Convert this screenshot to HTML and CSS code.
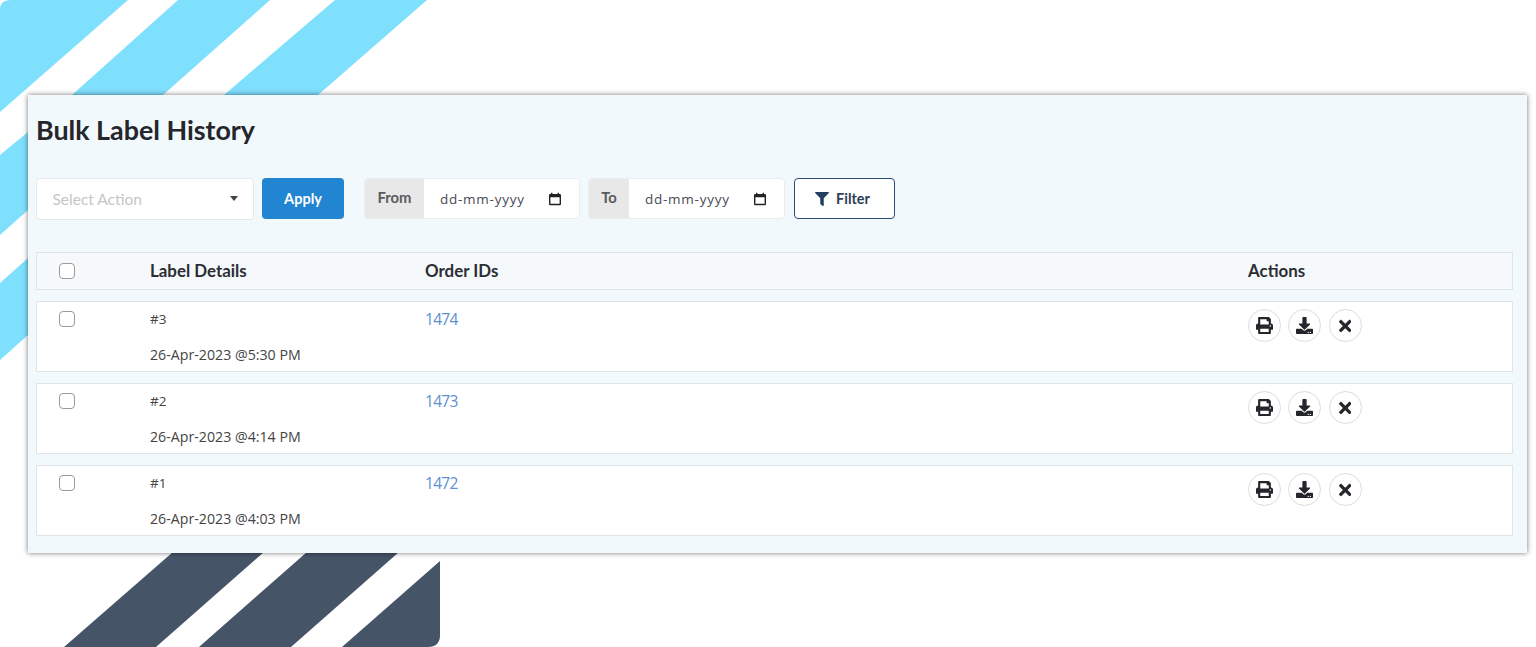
FILE: index.html
```html
<!DOCTYPE html>
<html lang="en">
<head>
<meta charset="utf-8">
<title>Bulk Label History</title>
<link rel="stylesheet" href="styles.css">
</head>
<body>
<svg class="backdrop" width="1536" height="647" viewBox="0 0 1536 647" aria-hidden="true">
  <g fill="#7fe0fe">
    <path d="M10 0H128L0 112V10Q0 0 10 0Z"/>
    <path d="M178 0H270L163 95L28 210L0 235V155L28 132L72 95Z"/>
    <path d="M335 0H427L318 95L28 335L0 360V283L28 258L224 95Z"/>
  </g>
  <g fill="#465468">
    <path d="M173 552H264L156 647H64Z"/>
    <path d="M307 552H399L291 647H199Z"/>
    <path d="M440 561V635Q440 647 428 647H342Z"/>
  </g>
</svg>
<main class="card">
  <h1 class="title">Bulk Label History</h1>
  <div class="toolbar">
    <div class="select"><span>Select Action</span><i class="caret"></i></div>
    <button class="apply">Apply</button>
    <div class="date date-from">
      <span class="date-label">From</span>
      <span class="date-value">dd-mm-yyyy</span>
      <svg class="cal" viewBox="0 0 14 14"><path d="M1 3.2Q1 2 2.2 2H3V.8H4.4V2H9.6V.8H11V2H11.8Q13 2 13 3.2V12Q13 13.2 11.8 13.2H2.2Q1 13.2 1 12ZM2.4 5.2V11.8H11.6V5.2Z"/></svg>
    </div>
    <div class="date date-to">
      <span class="date-label">To</span>
      <span class="date-value">dd-mm-yyyy</span>
      <svg class="cal" viewBox="0 0 14 14"><path d="M1 3.2Q1 2 2.2 2H3V.8H4.4V2H9.6V.8H11V2H11.8Q13 2 13 3.2V12Q13 13.2 11.8 13.2H2.2Q1 13.2 1 12ZM2.4 5.2V11.8H11.6V5.2Z"/></svg>
    </div>
    <button class="filter">
      <svg class="filter-icon" viewBox="0 0 512 512"><path d="M487.976 0H24.028C2.71 0-8.047 25.866 7.058 40.971L192 225.941V432c0 7.831 3.821 15.17 10.237 19.662l80 55.98C298.02 518.69 320 507.493 320 487.98V225.941l184.947-184.97C520.021 25.896 509.338 0 487.976 0z"/></svg>
      Filter
    </button>
  </div>

  <div class="row head">
    <div class="cell-check"><span class="check"></span></div>
    <div>Label Details</div>
    <div>Order IDs</div>
    <div>Actions</div>
  </div>

  <div class="row item">
    <div class="cell-check"><span class="check"></span></div>
    <div class="details"><div class="num">#3</div><div>26-Apr-2023 @5:30 PM</div></div>
    <div><a class="order" href="#">1474</a></div>
    <div class="actions">
      <button class="round"><svg class="i-print" viewBox="0 0 512 512"><path d="M448 192V77.25c0-8.49-3.37-16.62-9.37-22.63L393.37 9.37c-6-6-14.14-9.37-22.63-9.37H96C78.33 0 64 14.33 64 32v160c-35.35 0-64 28.65-64 64v112c0 8.84 7.16 16 16 16h48v96c0 17.67 14.33 32 32 32h320c17.67 0 32-14.33 32-32v-96h48c8.84 0 16-7.16 16-16V256c0-35.35-28.65-64-64-64zm-64 256H128v-96h256v96zm0-224H128V64h192v48c0 8.84 7.16 16 16 16h48v96zm48 72c-13.25 0-24-10.75-24-24 0-13.26 10.75-24 24-24s24 10.74 24 24c0 13.25-10.75 24-24 24z"/></svg></button>
      <button class="round"><svg class="i-print" viewBox="0 0 512 512"><path d="M216 0h80c13.3 0 24 10.7 24 24v168h87.7c17.8 0 26.7 21.5 14.1 34.1L269.7 378.3c-7.5 7.5-19.8 7.5-27.3 0L90.1 226.1c-12.6-12.6-3.7-34.1 14.1-34.1H192V24c0-13.3 10.7-24 24-24zm296 376v112c0 13.3-10.7 24-24 24H24c-13.3 0-24-10.7-24-24V376c0-13.3 10.7-24 24-24h146.7l49 49c20.1 20.1 52.5 20.1 72.6 0l49-49H488c13.3 0 24 10.7 24 24zm-124 88c0-11-9-20-20-20s-20 9-20 20 9 20 20 20 20-9 20-20zm64 0c0-11-9-20-20-20s-20 9-20 20 9 20 20 20 20-9 20-20z"/></svg></button>
      <button class="round"><svg class="i-x" viewBox="0 0 352 512"><path d="M242.72 256l100.07-100.07c12.28-12.28 12.28-32.19 0-44.48l-22.24-22.24c-12.28-12.28-32.19-12.28-44.48 0L176 189.28 75.93 89.21c-12.28-12.28-32.19-12.28-44.48 0L9.21 111.45c-12.28 12.28-12.28 32.19 0 44.48L109.28 256 9.21 356.07c-12.28 12.28-12.28 32.19 0 44.48l22.24 22.24c12.28 12.28 32.2 12.28 44.48 0L176 322.72l100.07 100.07c12.28 12.28 32.2 12.28 44.48 0l22.24-22.24c12.28-12.28 12.28-32.19 0-44.48L242.72 256z"/></svg></button>
    </div>
  </div>

  <div class="row item">
    <div class="cell-check"><span class="check"></span></div>
    <div class="details"><div class="num">#2</div><div>26-Apr-2023 @4:14 PM</div></div>
    <div><a class="order" href="#">1473</a></div>
    <div class="actions">
      <button class="round"><svg class="i-print" viewBox="0 0 512 512"><path d="M448 192V77.25c0-8.49-3.37-16.62-9.37-22.63L393.37 9.37c-6-6-14.14-9.37-22.63-9.37H96C78.33 0 64 14.33 64 32v160c-35.35 0-64 28.65-64 64v112c0 8.84 7.16 16 16 16h48v96c0 17.67 14.33 32 32 32h320c17.67 0 32-14.33 32-32v-96h48c8.84 0 16-7.16 16-16V256c0-35.35-28.65-64-64-64zm-64 256H128v-96h256v96zm0-224H128V64h192v48c0 8.84 7.16 16 16 16h48v96zm48 72c-13.25 0-24-10.75-24-24 0-13.26 10.75-24 24-24s24 10.74 24 24c0 13.25-10.75 24-24 24z"/></svg></button>
      <button class="round"><svg class="i-print" viewBox="0 0 512 512"><path d="M216 0h80c13.3 0 24 10.7 24 24v168h87.7c17.8 0 26.7 21.5 14.1 34.1L269.7 378.3c-7.5 7.5-19.8 7.5-27.3 0L90.1 226.1c-12.6-12.6-3.7-34.1 14.1-34.1H192V24c0-13.3 10.7-24 24-24zm296 376v112c0 13.3-10.7 24-24 24H24c-13.3 0-24-10.7-24-24V376c0-13.3 10.7-24 24-24h146.7l49 49c20.1 20.1 52.5 20.1 72.6 0l49-49H488c13.3 0 24 10.7 24 24zm-124 88c0-11-9-20-20-20s-20 9-20 20 9 20 20 20 20-9 20-20zm64 0c0-11-9-20-20-20s-20 9-20 20 9 20 20 20 20-9 20-20z"/></svg></button>
      <button class="round"><svg class="i-x" viewBox="0 0 352 512"><path d="M242.72 256l100.07-100.07c12.28-12.28 12.28-32.19 0-44.48l-22.24-22.24c-12.28-12.28-32.19-12.28-44.48 0L176 189.28 75.93 89.21c-12.28-12.28-32.19-12.28-44.48 0L9.21 111.45c-12.28 12.28-12.28 32.19 0 44.48L109.28 256 9.21 356.07c-12.28 12.28-12.28 32.19 0 44.48l22.24 22.24c12.28 12.28 32.2 12.28 44.48 0L176 322.72l100.07 100.07c12.28 12.28 32.2 12.28 44.48 0l22.24-22.24c12.28-12.28 12.28-32.19 0-44.48L242.72 256z"/></svg></button>
    </div>
  </div>

  <div class="row item">
    <div class="cell-check"><span class="check"></span></div>
    <div class="details"><div class="num">#1</div><div>26-Apr-2023 @4:03 PM</div></div>
    <div><a class="order" href="#">1472</a></div>
    <div class="actions">
      <button class="round"><svg class="i-print" viewBox="0 0 512 512"><path d="M448 192V77.25c0-8.49-3.37-16.62-9.37-22.63L393.37 9.37c-6-6-14.14-9.37-22.63-9.37H96C78.33 0 64 14.33 64 32v160c-35.35 0-64 28.65-64 64v112c0 8.84 7.16 16 16 16h48v96c0 17.67 14.33 32 32 32h320c17.67 0 32-14.33 32-32v-96h48c8.84 0 16-7.16 16-16V256c0-35.35-28.65-64-64-64zm-64 256H128v-96h256v96zm0-224H128V64h192v48c0 8.84 7.16 16 16 16h48v96zm48 72c-13.25 0-24-10.75-24-24 0-13.26 10.75-24 24-24s24 10.74 24 24c0 13.25-10.75 24-24 24z"/></svg></button>
      <button class="round"><svg class="i-print" viewBox="0 0 512 512"><path d="M216 0h80c13.3 0 24 10.7 24 24v168h87.7c17.8 0 26.7 21.5 14.1 34.1L269.7 378.3c-7.5 7.5-19.8 7.5-27.3 0L90.1 226.1c-12.6-12.6-3.7-34.1 14.1-34.1H192V24c0-13.3 10.7-24 24-24zm296 376v112c0 13.3-10.7 24-24 24H24c-13.3 0-24-10.7-24-24V376c0-13.3 10.7-24 24-24h146.7l49 49c20.1 20.1 52.5 20.1 72.6 0l49-49H488c13.3 0 24 10.7 24 24zm-124 88c0-11-9-20-20-20s-20 9-20 20 9 20 20 20 20-9 20-20zm64 0c0-11-9-20-20-20s-20 9-20 20 9 20 20 20 20-9 20-20z"/></svg></button>
      <button class="round"><svg class="i-x" viewBox="0 0 352 512"><path d="M242.72 256l100.07-100.07c12.28-12.28 12.28-32.19 0-44.48l-22.24-22.24c-12.28-12.28-32.19-12.28-44.48 0L176 189.28 75.93 89.21c-12.28-12.28-32.19-12.28-44.48 0L9.21 111.45c-12.28 12.28-12.28 32.19 0 44.48L109.28 256 9.21 356.07c-12.28 12.28-12.28 32.19 0 44.48l22.24 22.24c12.28 12.28 32.2 12.28 44.48 0L176 322.72l100.07 100.07c12.28 12.28 32.2 12.28 44.48 0l22.24-22.24c12.28-12.28 12.28-32.19 0-44.48L242.72 256z"/></svg></button>
    </div>
  </div>
</main>
</body>
</html>
```
FILE: styles.css
```css
* { box-sizing: border-box; }
html, body { margin: 0; height: 647px; overflow: hidden; background: #fff; }
body { padding: 95px 9px 0 28px; font-family: "Open Sans", sans-serif; color: #333; position: relative; }
.backdrop { position: absolute; left: 0; top: 0; }
.card {
  position: relative;
  height: 458px;
  padding: 0 14px 0 8px;
  background: #f2f9fd;
  box-shadow: 0 0 5px rgba(0, 0, 0, .55);
}
.title {
  margin: 0;
  padding-top: 17px;
  height: 83px;
  font: 700 26.85px/36px Lato, sans-serif;
  color: #24262b;
}
.toolbar { display: flex; align-items: flex-start; height: 42px; margin-bottom: 32px; }
.select {
  width: 218px; height: 42px;
  display: flex; align-items: center; justify-content: space-between;
  padding: 0 15px 0 15.5px;
  background: #fff; border: 1px solid #e6e9ec; border-radius: 4px;
  font: 400 15.5px Lato, sans-serif; color: #c6c6c6;
}
.caret { border: 4.5px solid transparent; border-top: 5px solid #444; border-bottom: 0; margin-top: -2px; }
.apply {
  width: 82px; height: 41px; margin-left: 8px;
  border: 0; border-radius: 4px; background: #2285d2; color: #fff;
  font: 700 14.5px Lato, sans-serif;
}
.date {
  height: 41px; display: flex; align-items: center;
  background: #fff; border: 1px solid #e9edf0; border-radius: 4px; overflow: hidden;
}
.date-from { width: 216px; margin-left: 20px; }
.date-to { width: 197px; margin-left: 8px; }
.date-label {
  align-self: stretch; display: flex; align-items: center; justify-content: center;
  background: #e8e8e8; color: #5b5b5b;
  font: 700 14.8px Lato, sans-serif; padding-bottom: 4px;
}
.date-from .date-label { width: 59px; }
.date-to .date-label { width: 40px; }
.date-value { margin-left: 16px; width: 108px; font: 400 13.5px "Open Sans", sans-serif; letter-spacing: .75px; color: #4a4a55; }
.cal { width: 14px; height: 14px; fill: #222; }
.filter {
  width: 101px; height: 41px; margin-left: 9px; padding: 0 4px 0 0;
  display: flex; align-items: center; justify-content: center; gap: 7px;
  background: #fff; border: 1px solid #2b4a75; border-radius: 4px;
  font: 700 14.5px Lato, sans-serif; color: #2e3f55;
}
.filter-icon { width: 14px; height: 14px; fill: #233f60; }
.row {
  display: grid;
  grid-template-columns: 113px 275px 823px 1fr;
  background: #fff;
  border: 1px solid #dfe4e8;
}
.head {
  height: 38px; align-items: center; margin-bottom: 11px;
  background: #f6f9fb;
  font: 700 16.9px/20px Lato, sans-serif; color: #2b2d33;
}
.item { height: 71px; margin-bottom: 11px; padding-top: 8px; font-size: 14.2px; color: #444; }
.cell-check { padding-left: 22px; }
.item .cell-check { padding-top: 1px; }
.head .cell-check { display: flex; align-items: center; }
.check {
  display: block; width: 16px; height: 16px;
  background: #fff; border: 1px solid #9a9a9a; border-radius: 4px;
}
.details { line-height: 19px; }
.details .num { font-size: 13.5px; }
.details div + div { margin-top: 16px; }
.order { font-size: 15.5px; letter-spacing: -.7px; line-height: 19px; color: #5b8fd0; text-decoration: none; display: block; }
.actions { display: flex; gap: 7.5px; margin: -1px 0 0 -.5px; }
.round {
  width: 33px; height: 33px; padding: 0;
  display: flex; align-items: center; justify-content: center;
  background: #fff; border: 1px solid #dcdcdc; border-radius: 50%;
}
.round svg { fill: #24262b; display: block; }
.i-print { width: 17px; height: 17px; }
.i-x { width: 12.5px; height: 18px; }
```
